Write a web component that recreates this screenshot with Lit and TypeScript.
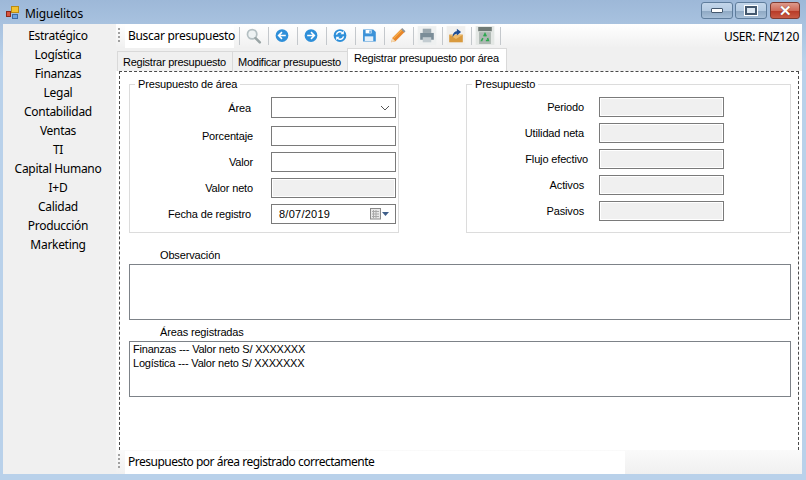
import { LitElement, html, css, svg } from 'lit';
import { customElement, property } from 'lit/decorators.js';

const MODULES = [
  'Estratégico', 'Logística', 'Finanzas', 'Legal', 'Contabilidad', 'Ventas',
  'TI', 'Capital Humano', 'I+D', 'Calidad', 'Producción', 'Marketing',
];

const ICONS = [
  svg`<circle cx="9" cy="8.5" r="5.500" fill="#eef2f3" stroke="#b4bfc2" stroke-width="2"/><path d="M13 13l5 5" stroke="#9aa5a6" stroke-width="3" stroke-linecap="round"/>`,
  svg`<circle cx="10" cy="10" r="7.500" fill="#2e8fd9"/><path d="M14.500 10H6.500M10 6l-4 4 4 4" fill="none" stroke="#fff" stroke-width="1.800"/>`,
  svg`<circle cx="10" cy="10" r="7.500" fill="#2e8fd9"/><path d="M5.500 10h8M10 6l4 4-4 4" fill="none" stroke="#fff" stroke-width="1.800"/>`,
  svg`<circle cx="10" cy="10" r="7.500" fill="#2e8fd9"/><path d="M5.800 9a4.300 4.300 0 0 1 7.600-1.800M14.200 11a4.300 4.300 0 0 1-7.600 1.800" fill="none" stroke="#fff" stroke-width="1.700"/><path d="M14.500 4.500v4h-4zM5.500 15.500v-4h4z" fill="#fff"/>`,
  svg`<path d="M3 3h12l3 3v11H3z" fill="#3c92d8"/><path d="M6 3.500h7v4H6z" fill="#fff"/><path d="M10.500 4h1.500v3h-1.500z" fill="#3c92d8"/><path d="M5 11h10v5.500H5z" fill="#e4f0fa"/>`,
  svg`<path d="M2 18l1.200-5L14 2.200l3.800 3.800L7 16.800z" fill="#e8862a"/><path d="M4.200 12.800l9.800-9.800 1 1-9.800 9.800z" fill="#f5b04c"/><path d="M2 18l1.200-5 3.800 3.800z" fill="#f3dcb8"/><path d="M13.600 2.600l1.400-1.400 3.800 3.800-1.400 1.400z" fill="#8d949a"/>`,
  svg`<path d="M-1-1h22v22H-1z" fill="#eef0f0"/><path d="M5 2h10v5H5z" fill="#9aa7ae"/><path d="M2 7h16v8H2z" fill="#7b8d98"/><path d="M5 12h10v6H5z" fill="#c3ccd1"/>`,
  svg`<path d="M-1-1h22v22H-1z" fill="#f1f0ee"/><path d="M2 9h16v9H2z" fill="#d99a3e"/><path d="M2 9l8 5 8-5z" fill="#eebb6c"/><path d="M6 12c0-4 2-7 5-7V2l5 4-5 4V8c-2 0-3 1-5 4z" fill="#1f4f96"/>`,
  svg`<path d="M-1-1h22v22H-1z" fill="#e3e7e4"/><path d="M2 0h16v5H2z" fill="#6f7a75"/><path d="M3 6h14v14H3z" fill="#aeb8b3"/><path d="M8.500 11l1.500-3 1.500 3M13 13l1 3h-3M7 16H6l1.500-3" fill="none" stroke="#2fa84f" stroke-width="1.800"/>`,
];

@customElement('app-root')
export class AppRoot extends LitElement {
  static styles = css`
    :host {
      display: block;
      width: 806px;
      height: 480px;
      overflow: hidden;
      font-family: 'Liberation Sans', Arial, sans-serif;
      font-size: 11px;
      letter-spacing: -0.15px;
      color: #000;
    }

    .window {
      height: 480px;
      box-sizing: border-box;
      padding: 0 4px 6px 3px;
      display: flex;
      flex-direction: column;
      background: linear-gradient(180deg, #9db8d8 0, #b9d1ea 60px);
    }

    .titlebar {
      height: 24px;
      flex: none;
      display: flex;
      align-items: center;
      gap: 6px;
      padding-left: 3px;
      font-family: 'Noto Sans', sans-serif;
      font-size: 12px;
      letter-spacing: -0.1px;
    }

    .title {
      flex: 1;
      padding-top: 2px;
    }

    .controls {
      display: flex;
      gap: 2px;
      margin: -4px 2px 0 0;
    }

    .ctl {
      box-sizing: border-box;
      width: 32px;
      height: 17px;
      display: flex;
      align-items: center;
      justify-content: center;
      border: 1px solid #5f7d9c;
      border-radius: 3px;
      background: linear-gradient(180deg, #c3d6ea 0, #b5cbe2 50%, #8fa9c4 55%, #a7bfd8 100%);
    }

    .ctl.close {
      width: 30px;
      margin-left: 1px;
      border-color: #7e3a30;
      background: linear-gradient(180deg, #dd9a8c 0, #cf6a58 50%, #b83b28 55%, #c85a45 100%);
    }

    .min-mark { width: 10px; height: 3px; background: #fff; border: 1px solid #44586e; border-radius: 1px; }
    .max-mark { width: 8px; height: 5px; border: 2px solid #44586e; background: #dfe9f3; outline: 1px solid #fff; }
    .x-mark { color: #fff; font: bold 15px/15px 'Liberation Sans', sans-serif; text-shadow: 0 0 1px #5a1c12; }

    .body {
      flex: 1;
      min-height: 0;
      display: flex;
      background: #f0f0f0;
    }

    .sidebar {
      width: 113px;
      box-sizing: border-box;
      flex: none;
      padding: 3px 3px 0 0;
      font-family: 'Noto Sans', sans-serif;
      font-size: 12px;
      letter-spacing: -0.3px;
      text-align: center;
    }

    .sidebar div {
      height: 19px;
      line-height: 18px;
    }

    .main {
      flex: 1;
      min-width: 0;
      display: flex;
      flex-direction: column;
    }

    .toolbar {
      height: 24px;
      flex: none;
      display: flex;
      align-items: center;
      background: linear-gradient(180deg, #fff 0, #f0f0f0 100%);
      font-family: 'Noto Sans', sans-serif;
      font-size: 12px;
      letter-spacing: -0.3px;
    }

    .grip {
      width: 2px;
      height: 16px;
      margin: 0 5px 0 2px;
      background: repeating-linear-gradient(180deg, #a0a0a0 0 2px, transparent 2px 4px);
    }

    .search {
      width: 109px;
      height: 24px;
      line-height: 24px;
      padding-left: 3px;
      box-sizing: border-box;
      background: #fff;
      white-space: nowrap;
    }

    .sep {
      width: 1px;
      height: 18px;
      margin-left: 5px;
      background: #c4c8cc;
    }

    .tool {
      width: 20px;
      height: 20px;
      margin-left: 3px;
      display: flex;
    }

    .tool + .sep { margin-left: 5px; }

    .user {
      margin-left: auto;
      padding-right: 3px;
    }

    .tabs {
      height: 23px;
      flex: none;
      display: flex;
      align-items: flex-end;
      padding-left: 1px;
      white-space: nowrap;
      letter-spacing: -0.25px;
    }

    .tab {
      box-sizing: border-box;
      height: 20px;
      line-height: 20px;
      padding: 0 5px;
      border: 1px solid #d9d9d9;
      border-bottom: none;
      border-right: none;
      width: 115px;
    }

    .tab.active {
      width: 160px;
      height: 23px;
      line-height: 19px;
      padding: 0 6px;
      background: #fff;
      border-right: 1px solid #d9d9d9;
    }

    .page {
      flex: 1;
      min-height: 0;
      display: flex;
      background: #fff;
      padding-left: 3px;
      padding-right: 3px;
    }

    .dashed {
      flex: 1;
      min-width: 0;
      box-sizing: border-box;
      border: 1px dashed #4a4a4a;
      border-bottom: none;
      padding: 5px 7px 0 9px;
    }

    .groups {
      display: flex;
      gap: 67px;
    }

    fieldset {
      margin: 0;
      box-sizing: border-box;
      height: 156px;
      border: 1px solid #dcdcdc;
      padding: 0;
    }

    fieldset.area { width: 270px; }
    fieldset.budget { width: 325px; }

    legend {
      margin-left: 5px;
      padding: 1px 3px 0;
      line-height: 13px;
    }

    .rows {
      display: flex;
      flex-direction: column;
      padding-top: 6px;
    }

    .row {
      display: flex;
      align-items: center;
      gap: 18px;
      margin-bottom: 6px;
    }

    .row label {
      flex: none;
      width: 123px;
      text-align: right;
    }

    .row label.inset { padding-right: 2px; width: 121px; }
    .row.first { margin-bottom: 8px; }

    .budget .row { gap: 15px; }
    .budget label { width: 117px; text-align: right; }
    .budget label.out { width: 121px; margin-right: -4px; }

    .field {
      box-sizing: border-box;
      width: 125px;
      height: 20px;
      border: 1px solid #7a7a7a;
      background: #fff;
      display: flex;
      align-items: center;
      padding: 0 0 0 7px;
    }

    .field.combo { height: 21px; justify-content: flex-end; padding-right: 5px; }
    .field.off { background: #f0f0f0; box-shadow: inset 0 0 0 1px #fff; }
    .field.date { justify-content: space-between; padding-right: 5px; }
    .field.date span { letter-spacing: 0.25px; }

    .caption {
      margin: 14px 0 1px 31px;
      height: 16px;
      line-height: 16px;
    }

    .box {
      box-sizing: border-box;
      width: 662px;
      height: 56px;
      border: 1px solid #7d8288;
      background: #fff;
    }

    .caption.second { margin-top: 4px; }

    .list {
      padding: 0 3px;
      line-height: 14px;
      letter-spacing: -0.2px;
    }

    .status {
      height: 24px;
      flex: none;
      display: flex;
      align-items: center;
      background: linear-gradient(180deg, #fafafa 0, #f0f0f0 100%);
      font-family: 'Noto Sans', sans-serif;
      font-size: 12px;
      letter-spacing: -0.5px;
    }

    .status .msg {
      width: 500px;
      height: 23px;
      line-height: 22px;
      padding-left: 3px;
      box-sizing: border-box;
      background: #fff;
    }
  `;

  @property({ type: String })
  user = 'FNZ120';

  private logo() {
    return html`<svg width="13" height="13" viewBox="0 0 13 13">
      <rect x="0.500" y="5.500" width="4" height="5" fill="#d9553f" stroke="#8c2a1c"/>
      <rect x="5.500" y="0.500" width="7" height="6" fill="#f2c230" stroke="#b98a12"/>
      <rect x="6.500" y="8.500" width="5" height="4" fill="#6ea3dc" stroke="#3c6aa3"/>
    </svg>`;
  }

  private row(text: string, kind = '', labelClass = '', first = false) {
    return html`<div class="row ${first ? 'first' : ''}">
      <label class=${labelClass}>${text}</label>
      <div class="field ${kind}">
        ${kind === 'combo' ? html`<svg width="10" height="6" viewBox="0 0 10 6"><path d="M1 1l4 4 4-4" fill="none" stroke="#555"/></svg>` : ''}
        ${kind === 'date' ? html`<span>8/07/2019</span>
          <svg width="20" height="12" viewBox="0 0 20 12">
            <rect x="0.500" y="0.500" width="10" height="10.500" fill="#e8e8e8" stroke="#8a8a8a"/>
            <path d="M2 3.500h7M2 6h7M2 8.500h7M3.500 2v8M6 2v8" stroke="#a9a9a9"/>
            <path d="M12 4h7l-3.500 4z" fill="#3f5f8a"/>
          </svg>` : ''}
      </div>
    </div>`;
  }

  render() {
    return html`
      <div class="window">
        <div class="titlebar">
          ${this.logo()}
          <span class="title">Miguelitos</span>
          <div class="controls">
            <div class="ctl"><div class="min-mark"></div></div>
            <div class="ctl"><div class="max-mark"></div></div>
            <div class="ctl close"><span class="x-mark">✕</span></div>
          </div>
        </div>
        <div class="body">
          <nav class="sidebar">
            ${MODULES.map((m) => html`<div>${m}</div>`)}
          </nav>
          <div class="main">
            <div class="toolbar">
              <div class="grip"></div>
              <div class="search">Buscar presupuesto</div>
              <div class="sep"></div>
              ${ICONS.map((icon) => html`
                <svg class="tool" viewBox="0 0 20 20"><g transform="translate(1.5 1) scale(0.85)">${icon}</g></svg>
                <div class="sep"></div>
              `)}
              <span class="user">USER: ${this.user}</span>
            </div>
            <div class="tabs">
              <div class="tab">Registrar presupuesto</div>
              <div class="tab">Modificar presupuesto</div>
              <div class="tab active">Registrar presupuesto por área</div>
            </div>
            <div class="page">
              <div class="dashed">
                <div class="groups">
                  <fieldset class="area">
                    <legend>Presupuesto de área</legend>
                    <div class="rows">
                      ${this.row('Área', 'combo', 'inset', true)}
                      ${this.row('Porcentaje')}
                      ${this.row('Valor')}
                      ${this.row('Valor neto', 'off')}
                      ${this.row('Fecha de registro', 'date', 'inset')}
                    </div>
                  </fieldset>
                  <fieldset class="budget">
                    <legend>Presupuesto</legend>
                    <div class="rows">
                      ${this.row('Periodo', 'off')}
                      ${this.row('Utilidad neta', 'off')}
                      ${this.row('Flujo efectivo', 'off', 'out')}
                      ${this.row('Activos', 'off')}
                      ${this.row('Pasivos', 'off')}
                    </div>
                  </fieldset>
                </div>
                <div class="caption">Observación</div>
                <div class="box"></div>
                <div class="caption second">Áreas registradas</div>
                <div class="box list">
                  <div>Finanzas --- Valor neto S/ XXXXXXX</div>
                  <div>Logística --- Valor neto S/ XXXXXXX</div>
                </div>
              </div>
            </div>
            <div class="status">
              <div class="grip"></div>
              <div class="msg">Presupuesto por área registrado correctamente</div>
            </div>
          </div>
        </div>
      </div>
    `;
  }
}

declare global {
  interface HTMLElementTagNameMap {
    'app-root': AppRoot;
  }
}
